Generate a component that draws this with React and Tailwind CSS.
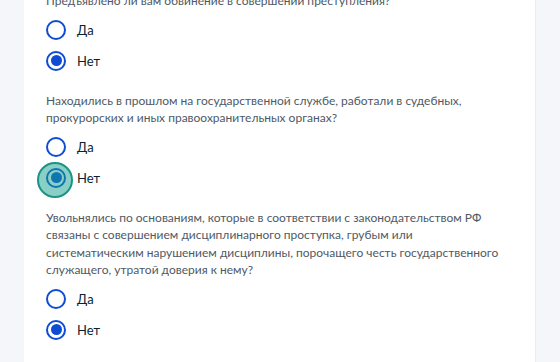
const questions = [
  {
    lines: ["Предъявлено ли вам обвинение в совершении преступления?"],
    value: "no",
  },
  {
    lines: [
      "Находились в прошлом на государственной службе, работали в судебных,",
      "прокурорских и иных правоохранительных органах?",
    ],
    value: "no",
    halo: true,
  },
  {
    lines: [
      "Увольнялись по основаниям, которые в соответствии с законодательством РФ",
      "связаны с совершением дисциплинарного проступка, грубым или",
      "систематическим нарушением дисциплины, порочащего честь государственного",
      "служащего, утратой доверия к нему?",
    ],
    value: "no",
  },
  {
    lines: [
      "Были ли вы привлечены к административной ответственности за коррупционное правонарушение?",
    ],
    value: "no",
  },
];

function Radio({ checked, label, halo }) {
  return (
    <label className="relative flex items-center h-5 gap-[11px] cursor-pointer">
      <span className="w-5 h-5 rounded-full border-2 border-[#0d4cd3] bg-white flex items-center justify-center shrink-0">
        {checked && <span className="w-[11px] h-[11px] rounded-full bg-[#0d4cd3]" />}
      </span>
      <span className="text-[13px] leading-5 text-[#0b1f33]">{label}</span>
      {halo && (
        <span className="absolute left-[-9px] top-[-6px] w-[36px] h-[36px] rounded-full bg-[#14a08c]/50 border-2 border-[#1a9484]" />
      )}
    </label>
  );
}

export default function App() {
  return (
    <div
      className="w-[560px] h-[362px] overflow-hidden bg-[#f4f6fa]"
      style={{ fontFamily: "Lato, 'Noto Sans', sans-serif" }}
    >
      <div className="mx-[24px] -mt-[8px] bg-white border-r border-[#e8edf4] px-[22px] pb-10 flex flex-col gap-[21px]">
        {questions.map((q, i) => (
          <div key={i} className="flex flex-col gap-[10px]">
            <p className="text-[12px] leading-[17.5px] text-[#4f5964]">
              {q.lines.map((l, j) => (
                <span key={j} className="block whitespace-nowrap">
                  {l}
                </span>
              ))}
            </p>
            <div className="flex flex-col gap-[11px]">
              <Radio label="Да" checked={q.value === "yes"} />
              <Radio label="Нет" checked={q.value === "no"} halo={q.halo} />
            </div>
          </div>
        ))}
      </div>
    </div>
  );
}
